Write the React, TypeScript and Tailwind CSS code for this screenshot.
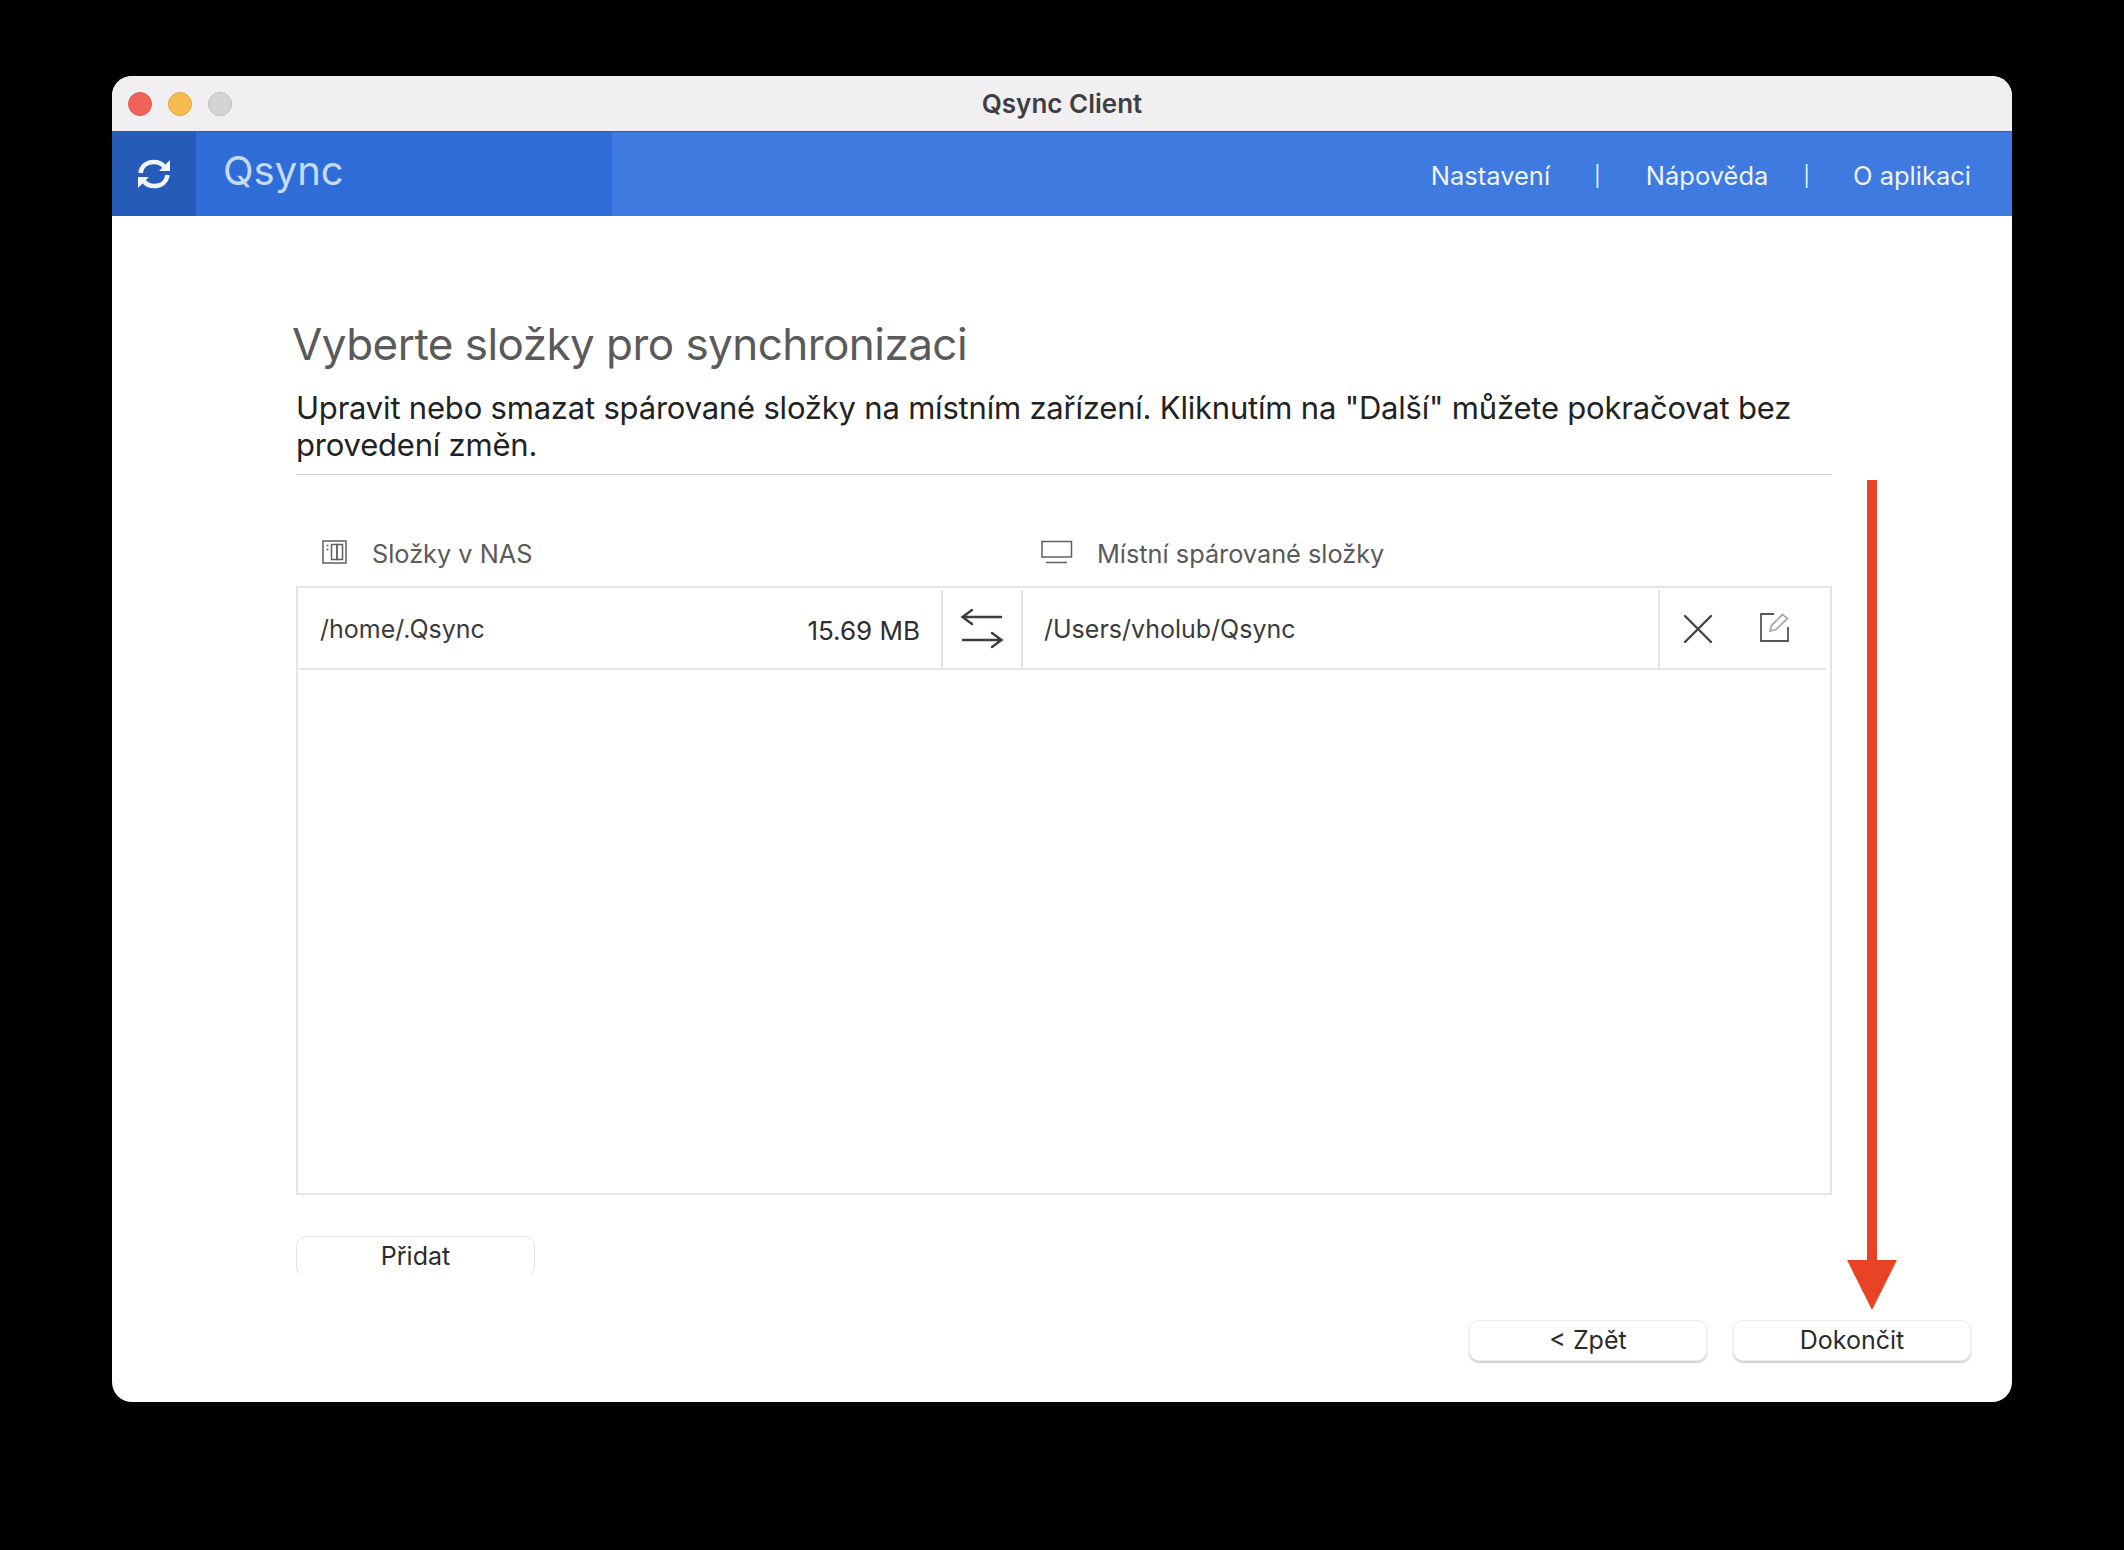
/* ---------- Icons ---------- */
function SyncIcon() {
  return (
    <svg width="40" height="40" viewBox="0 0 40 40" fill="none" stroke="#f2f6fd" strokeWidth="4.500">
      <path d="M6.500 19C7.500 12 13 8 20 8c4.500 0 8 1.800 10.500 5" />
      <path d="M33.500 21c-1 7-6.500 11-13.500 11-4.500 0-8-1.800-10.500-5" />
      <path d="M36 6v11H25z" fill="#f2f6fd" stroke="none" />
      <path d="M4 34V23h11z" fill="#f2f6fd" stroke="none" />
    </svg>
  );
}

function NasIcon() {
  return (
    <svg width="25" height="24" viewBox="0 0 25 24" fill="none" stroke="#5f5f5f" strokeWidth="1.500">
      <rect x="1" y="1" width="23" height="22" />
      <rect x="9.500" y="4.500" width="5.500" height="15" />
      <rect x="15" y="4.500" width="5.500" height="15" />
      <path d="M4.500 5.500h2M4.500 9.500h2" />
    </svg>
  );
}

function MonitorIcon() {
  return (
    <svg width="32" height="24" viewBox="0 0 32 24" fill="none" stroke="#5f5f5f" strokeWidth="1.500">
      <rect x="1" y="1.500" width="29.500" height="15.500" />
      <path d="M5 22.500h21" />
    </svg>
  );
}

function SwapIcon() {
  return (
    <svg width="44" height="44" viewBox="0 0 44 44" fill="none" stroke="#3d3d3d" strokeWidth="2.400" strokeLinecap="round">
      <path d="M3 10h38M12 3 2.500 10l9.500 7" />
      <path d="M3 33h38M32 26l9.500 7-9.500 7" />
    </svg>
  );
}

function CloseIcon() {
  return (
    <svg width="30" height="30" viewBox="0 0 30 30" fill="none" stroke="#444" strokeWidth="2.400" strokeLinecap="round">
      <path d="M2 2l26 26M28 2 2 28" />
    </svg>
  );
}

function EditIcon() {
  return (
    <svg width="30" height="30" viewBox="0 0 30 30" fill="none">
      <path d="M15 2H2v27h27V15" stroke="#555" strokeWidth="1.800" />
      <path d="M11 19l1.500-5.500L23.500 2.500l5 4L17 17.500z" stroke="#aaa" strokeWidth="1.800" />
    </svg>
  );
}

/* ---------- Small parts ---------- */
function ActionButton({ label, className }: { label: string; className: string }) {
  return (
    <button className={`h-[41px] rounded-[10px] bg-white text-[25px] leading-none text-[#2b2b2b] ${className}`}>
      {label}
    </button>
  );
}

function TrafficLights() {
  return (
    <div className="flex gap-4">
      <span className="h-6 w-6 rounded-full border border-[#dc5a50] bg-[#f0635a]" />
      <span className="h-6 w-6 rounded-full border border-[#dfa93f] bg-[#f5bd4f]" />
      <span className="h-6 w-6 rounded-full border border-[#bdbdbd] bg-[#d4d3d5]" />
    </div>
  );
}

export default function App() {
  return (
    <div className="relative h-[1550px] w-[2124px] overflow-hidden bg-black pl-[112px] pt-[76px] font-['Inter',sans-serif]">
      <div className="flex h-[1326px] w-[1900px] flex-col overflow-hidden rounded-[20px] bg-white">
        {/* Title bar */}
        <div className="relative flex h-[56px] shrink-0 items-center justify-center border-b border-[#2a5db8] bg-[#f1eff2]">
          <div className="absolute left-4">
            <TrafficLights />
          </div>
          <span className="text-[26px] font-semibold text-[#3f3e42]">Qsync Client</span>
        </div>

        {/* Blue header */}
        <div className="flex h-[84px] shrink-0 bg-[#3e7ae0]">
          <div className="flex w-[84px] items-center justify-center bg-[#265bb9]">
            <SyncIcon />
          </div>
          <div className="flex w-[416px] items-center bg-[#2e6cd8] pb-[6px] pl-[27px] text-[40px] text-[#c4daf6]">
            Qsync
          </div>
          <nav className="flex flex-1 items-center justify-end pr-[41px] pt-[4px] text-[25.500px] text-[#eef4fd]">
            <span>Nastavení</span>
            <span className="ml-[44px] text-[20px]">|</span>
            <span className="ml-[45px]">Nápověda</span>
            <span className="ml-[35px] text-[20px]">|</span>
            <span className="ml-[43px]">O aplikaci</span>
          </nav>
        </div>

        {/* Content */}
        <div className="flex flex-1 flex-col pl-[184px] pr-[41px]">
          <h1 className="-ml-[4px] mt-[102px] text-[44px] leading-[52px] tracking-[-0.550px] text-[#5a5a5a]">
            Vyberte složky pro synchronizaci
          </h1>
          <p className="mt-[19px] w-[1536px] border-b border-[#cfcfcf] pb-[11px] text-[31px] leading-[37px] tracking-[-0.200px] text-[#222]">
            Upravit nebo smazat spárované složky na místním zařízení. Kliknutím na "Další" můžete pokračovat bez
            provedení změn.
          </p>

          <div className="mt-[65px] flex h-[46px] w-[1536px] text-[25.300px] text-[#5a5a5a]">
            <div className="flex w-[745px] items-start gap-[25px] pl-[26px]">
              <NasIcon />
              <span className="-mt-[1px] leading-[30px]">Složky v NAS</span>
            </div>
            <div className="flex items-start gap-[24px]">
              <MonitorIcon />
              <span className="-mt-[1px] leading-[30px]">Místní spárované složky</span>
            </div>
          </div>

          {/* Pair table */}
          <div className="h-[609px] w-[1536px] border-2 border-[#e4e4e4] pl-[1px] pr-[4px] pt-[2px]">
            <div className="flex h-[80px] border-b-2 border-[#e4e4e4] text-[25px] text-[#3b3b3b]">
              <div className="flex w-[642px] items-center justify-between pl-[21px] pr-[21px]">
                <span className="mt-[2px]">/home/.Qsync</span>
                <span className="mt-[2px] text-[26px] text-[#2e2e2e]">15.69 MB</span>
              </div>
              <div className="flex w-[82px] items-center justify-center border-x-2 border-[#e4e4e4]">
                <SwapIcon />
              </div>
              <div className="flex w-[635px] items-center pl-[21px] pt-[2px]">/Users/vholub/Qsync</div>
              <div className="flex flex-1 items-center gap-[46px] border-l-2 border-[#e4e4e4] pl-[23px]">
                <CloseIcon />
                <div className="-mt-[4px]">
                  <EditIcon />
                </div>
              </div>
            </div>
          </div>

          <ActionButton
            label="Přidat"
            className="mt-[41px] w-[239px] border border-[#e6e6e6] border-b-white"
          />

          <div className="mt-[43px] flex justify-end gap-[26px]">
            <ActionButton label="< Zpět" className="w-[238px] border border-[#ececec] shadow-[0_2px_2px_#cfcfcf]" />
            <ActionButton label="Dokončit" className="w-[238px] border border-[#ececec] shadow-[0_2px_2px_#cfcfcf]" />
          </div>
        </div>
      </div>

      {/* Red annotation arrow */}
      <div className="absolute left-[1847px] top-[480px] flex w-[50px] flex-col items-center">
        <div className="h-[780px] w-[10px] bg-[#e94325]" />
        <div className="h-0 w-0 border-x-[25px] border-t-[50px] border-x-transparent border-t-[#e94325]" />
      </div>
    </div>
  );
}
